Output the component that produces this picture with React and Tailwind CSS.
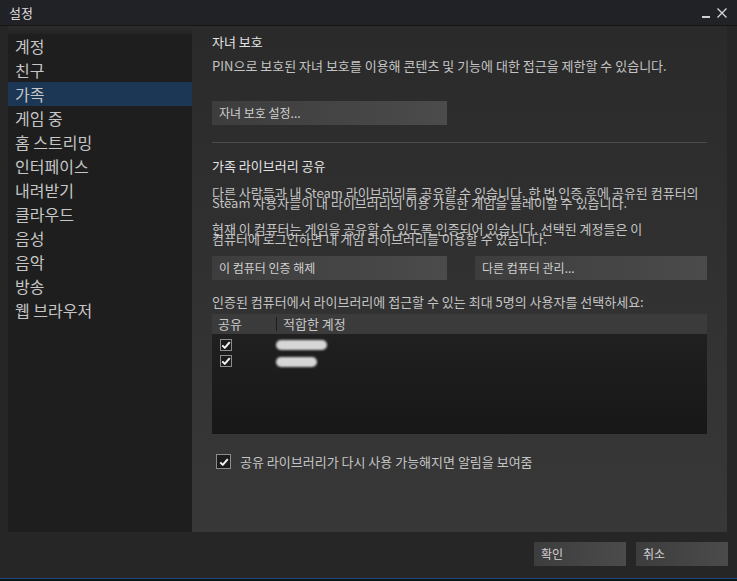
import React from "react";

const font = { fontFamily: '"Noto Sans CJK KR", "Noto Sans", sans-serif' };

const menu = [
  "계정",
  "친구",
  "가족",
  "게임 중",
  "홈 스트리밍",
  "인터페이스",
  "내려받기",
  "클라우드",
  "음성",
  "음악",
  "방송",
  "웹 브라우저",
];

const Check = ({ size = "w-[12px] h-[12px]" }) => (
  <span
    className={`${size} flex items-center justify-center border border-[#8c8c8c] bg-[#1c1c1c]`}
  >
    <svg viewBox="0 0 12 12" className="w-[10px] h-[10px]">
      <path
        d="M1.5 6.5 L4.5 9.5 L10.5 2.5"
        fill="none"
        stroke="#f2f2f2"
        strokeWidth="2.4"
        strokeLinejoin="round"
      />
    </svg>
  </span>
);

const Button = ({ children, w }) => (
  <div
    className={`${w} h-[24px] flex items-center pl-[7px] bg-linear-to-r from-[#3d3d3d] to-[#4b4b4b] text-[12px] text-[#d0d0d0] whitespace-nowrap`}
  >
    {children}
  </div>
);

const App = () => {
  return (
    <div
      className="w-[737px] h-[581px] bg-[#262626] flex flex-col overflow-hidden"
      style={font}
    >
      {/* title bar */}
      <div className="h-[26px] bg-[#212226] flex items-center justify-between pl-[9px] pr-[10px] border-b border-[#151515]">
        <span className="text-[13px] text-[#dedede]">설정</span>
        <div className="flex items-center gap-[7px]">
          <span className="w-[8px] h-[2px] bg-[#d0d0d0] mt-[8px]"></span>
          <svg viewBox="0 0 10 10" className="w-[10px] h-[10px]">
            <path d="M0.5 0.5 L9.5 9.5 M9.5 0.5 L0.5 9.5" stroke="#d8d8d8" strokeWidth="1.3" />
          </svg>
        </div>
      </div>

      {/* main */}
      <div className="h-[506px] flex pl-[8px] pr-[10px]">
        {/* sidebar */}
        <div className="w-[184px] bg-[#1e1e1e] flex flex-col">
          <div className="h-[8px] bg-linear-to-b from-[#2d2d2d] to-[#232323]"></div>
          {menu.map((m) => (
            <div
              key={m}
              className={`h-[24px] flex items-center pl-[7px] text-[16px] text-[#c6c6c6] ${
                m === "가족" ? "bg-[#1c3655]" : ""
              }`}
            >
              {m}
            </div>
          ))}
        </div>

        {/* content */}
        <div className="w-[535px] bg-linear-to-b from-[#2a2a2a] to-[#383838] pl-[20px] pr-[20px] pt-[8px] flex flex-col">
          <div className="text-[13px] leading-[16px] text-[#e2e2e2]">자녀 보호</div>
          <div className="mt-[8px] text-[13px] leading-[16px] text-[#c4c4c4] whitespace-nowrap">
            PIN으로 보호된 자녀 보호를 이용해 콘텐츠 및 기능에 대한 접근을 제한할 수 있습니다.
          </div>
          <div className="mt-[27px]">
            <Button w="w-[235px]">자녀 보호 설정...</Button>
          </div>
          <div className="mt-[17px] h-[1px] bg-[#4c4c4c]"></div>
          <div className="mt-[15px] text-[13px] leading-[16px] text-[#e2e2e2]">
            가족 라이브러리 공유
          </div>
          <div className="mt-[14px] text-[13px] leading-[10px] text-[#c4c4c4] whitespace-nowrap">
            다른 사람들과 내 Steam 라이브러리를 공유할 수 있습니다. 한 번 인증 후에 공유된 컴퓨터의
            <br />
            Steam 사용자들이 내 라이브러리의 이용 가능한 게임을 플레이할 수 있습니다.
          </div>
          <div className="mt-[16px] text-[13px] leading-[10px] text-[#c4c4c4] whitespace-nowrap">
            현재 이 컴퓨터는 게임을 공유할 수 있도록 인증되어 있습니다. 선택된 계정들은 이
            <br />
            컴퓨터에 로그인하면 내 게임 라이브러리를 이용할 수 있습니다.
          </div>
          <div className="mt-[12px] flex gap-[28px]">
            <Button w="w-[235px]">이 컴퓨터 인증 해제</Button>
            <Button w="w-[232px]">다른 컴퓨터 관리...</Button>
          </div>
          <div className="mt-[14px] text-[13px] leading-[16px] text-[#c4c4c4] whitespace-nowrap">
            인증된 컴퓨터에서 라이브러리에 접근할 수 있는 최대 5명의 사용자를 선택하세요:
          </div>

          {/* table */}
          <div className="mt-[4px] w-[495px] flex flex-col">
            <div className="h-[20px] bg-[#3b3b3b] flex items-center text-[13px] text-[#c8c8c8]">
              <span className="w-[64px] pl-[6px]">공유</span>
              <span className="w-[1px] h-[14px] bg-[#1e1e1e]"></span>
              <span className="pl-[6px]">적합한 계정</span>
            </div>
            <div className="h-[100px] bg-linear-to-b from-[#202020] to-[#171717] pt-[5px] flex flex-col gap-[4px]">
              <div className="flex items-center h-[12px]">
                <span className="w-[64px] pl-[8px]">
                  <Check />
                </span>
                <span className="w-[51px] h-[10px] rounded-full bg-[#d6d6d6] blur-[1px]"></span>
              </div>
              <div className="flex items-center h-[12px]">
                <span className="w-[64px] pl-[8px]">
                  <Check />
                </span>
                <span className="w-[41px] h-[10px] rounded-full bg-[#d6d6d6] blur-[1px] mt-[2px]"></span>
              </div>
            </div>
          </div>

          <div className="mt-[18px] flex items-center gap-[9px] pl-[4px]">
            <Check size="w-[15px] h-[15px]" />
            <span className="text-[13px] text-[#c4c4c4]">
              공유 라이브러리가 다시 사용 가능해지면 알림을 보여줌
            </span>
          </div>
        </div>
      </div>

      {/* footer */}
      <div className="h-[46px] flex justify-end items-start pt-[10px] pr-[9px] gap-[10px]">
        <Button w="w-[92px]">확인</Button>
        <Button w="w-[92px]">취소</Button>
      </div>
      <div className="h-[1px] bg-[#1f4a75]"></div>
      <div className="h-[2px] bg-[#0f1419]"></div>
    </div>
  );
};

export default App;
